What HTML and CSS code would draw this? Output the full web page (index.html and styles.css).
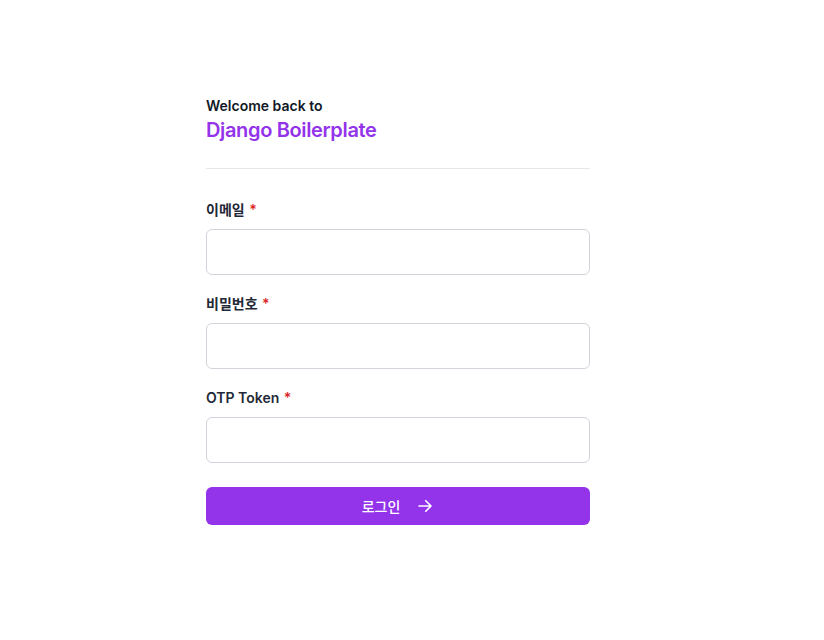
FILE: index.html
```html
<!DOCTYPE html>
<html lang="ko">
<head>
<meta charset="utf-8">
<link rel="stylesheet" href="styles.css">
</head>
<body>
<main class="page">
  <div class="card">
    <header class="head">
      <p class="welcome">Welcome back to</p>
      <h1 class="brand">Django Boilerplate</h1>
    </header>
    <form class="form">
      <div class="field">
        <label class="label">이메일 <span class="req">*</span></label>
        <input class="input" type="email">
      </div>
      <div class="field">
        <label class="label">비밀번호 <span class="req">*</span></label>
        <input class="input" type="password">
      </div>
      <div class="field">
        <label class="label">OTP Token <span class="req">*</span></label>
        <input class="input" type="text">
      </div>
      <button class="submit" type="button">
        <span>로그인</span>
        <svg width="18" height="18" viewBox="0 0 24 24" fill="none" stroke="currentColor" stroke-width="2.2" stroke-linecap="round" stroke-linejoin="round"><path d="M4 12h15M13 5l7 7-7 7"/></svg>
      </button>
    </form>
  </div>
</main>
</body>
</html>
```
FILE: styles.css
```css
* { box-sizing: border-box; }
html, body { margin: 0; padding: 0; background: #fff; }
body {
  font-family: Inter, "Noto Sans CJK KR", sans-serif;
  color: #111827;
}
.page {
  padding: 96px 0 0 206px;
}
.card {
  width: 384px;
}
.head {
  padding-bottom: 24px;
  border-bottom: 1px solid #e5e7eb;
}
.welcome {
  margin: 0;
  font-size: 14px;
  font-weight: 600;
  line-height: 20px;
  color: #111827;
}
.brand {
  margin: 0;
  font-size: 20px;
  font-weight: 600;
  line-height: 28px;
  color: #9333ea;
  letter-spacing: -0.35px;
}
.form {
  padding-top: 31px;
  display: flex;
  flex-direction: column;
}
.field {
  display: flex;
  flex-direction: column;
  margin-bottom: 19px;
}
.label {
  font-size: 14px;
  font-weight: 600;
  line-height: 20px;
  color: #1f2937;
  margin-bottom: 9px;
}
.req { color: #dc2626; margin-left: 1px; }
.input {
  height: 46px;
  border: 1px solid #d1d5db;
  border-radius: 6px;
  background: #fff;
  font: inherit;
  padding: 0 12px;
}
.submit {
  height: 38px;
  border: 0;
  border-radius: 6px;
  background: #9333ea;
  color: #fff;
  font-family: inherit;
  font-size: 14px;
  font-weight: 500;
  display: flex;
  align-items: center;
  justify-content: center;
  gap: 16px;
  margin-top: 5px;
}
```
